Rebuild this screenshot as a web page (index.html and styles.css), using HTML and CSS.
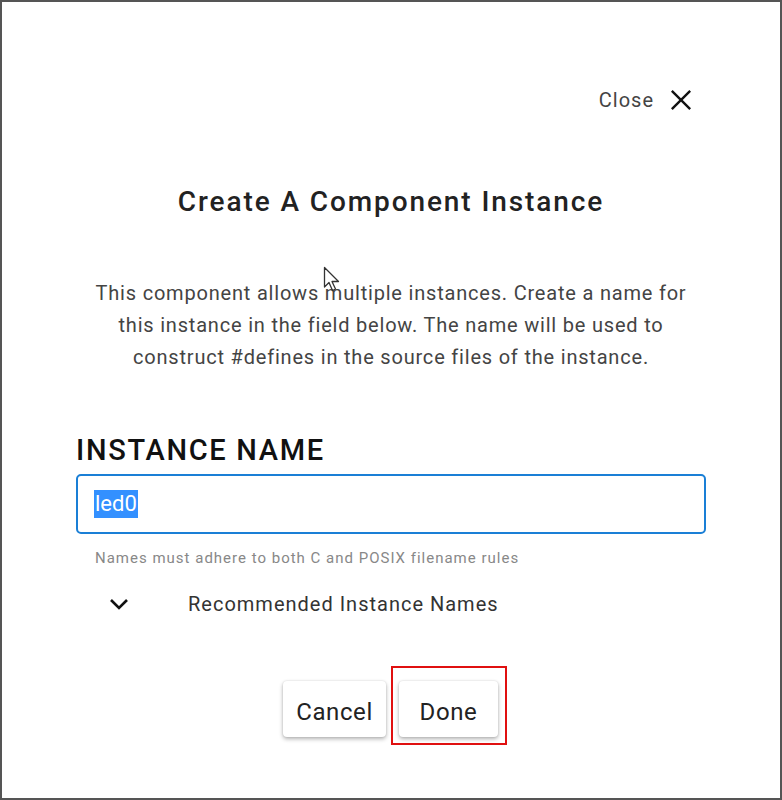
FILE: index.html
```html
<!DOCTYPE html>
<html lang="en">
<head>
  <meta charset="UTF-8">
  <title>Create A Component Instance</title>
  <link rel="stylesheet" href="styles.css">
</head>
<body>
  <div class="frame">
    <div class="dialog">
      <!-- Close -->
      <div class="close-row">
        <span class="close-text">Close</span>
        <svg class="close-icon" width="24" height="24" viewBox="0 0 24 24">
          <path d="M2 2 L22 22 M22 2 L2 22" stroke="#111" stroke-width="2.6" fill="none"/>
        </svg>
      </div>

      <div class="title">Create A Component Instance</div>

      <p class="desc">
        This component allows multiple instances. Create a name for<br>
        this instance in the field below. The name will be used to<br>
        construct #defines in the source files of the instance.
      </p>

      <div class="label">INSTANCE NAME</div>
      <div class="input-box">
        <span class="selected">led0</span>
      </div>
      <div class="helper">Names must adhere to both C and POSIX filename rules</div>

      <div class="recommended">
        <svg class="chevron" width="20" height="20" viewBox="0 0 20 20">
          <path d="M2 6 L10 14 L18 6" stroke="#111" stroke-width="2.6" fill="none"/>
        </svg>
        <span>Recommended Instance Names</span>
      </div>

      <div class="actions">
        <button class="btn btn-cancel">Cancel</button>
        <div class="highlight">
          <button class="btn btn-done">Done</button>
        </div>
      </div>
    </div>

    <!-- mouse pointer -->
    <svg class="pointer" width="24" height="30" viewBox="0 0 24 30">
      <path d="M1.5 1.5 L1.5 21 L6 16.5 L9.5 24.5 L12.5 23 L9 15.5 L15.5 15.5 Z" fill="#fff" stroke="#333" stroke-width="1.3" stroke-linejoin="round"/>
    </svg>
  </div>
</body>
</html>
```

FILE: styles.css
```css
* {
  box-sizing: border-box;
}

html, body {
  margin: 0;
  padding: 0;
  background: #fff;
  font-family: Roboto, "Liberation Sans", sans-serif;
}

.frame {
  width: 782px;
  height: 800px;
  border: 2px solid #555;
  position: relative;
  background: #fff;
}

.dialog {
  padding: 0 74px;
  display: flex;
  flex-direction: column;
}

.close-row {
  display: flex;
  justify-content: flex-end;
  align-items: center;
  gap: 16px;
  margin-top: 86px;
  margin-right: 14px;
  height: 24px;
}

.close-text {
  font-size: 20px;
  letter-spacing: 1px;
  color: #444;
}

.close-icon {
  width: 22px;
  height: 22px;
}

.title {
  margin-top: 72px;
  text-align: center;
  font-size: 28px;
  font-weight: 500;
  letter-spacing: 1.9px;
  color: #222;
  line-height: 36px;
}

.desc {
  margin: 57px 0 0;
  text-align: center;
  font-size: 20px;
  line-height: 32px;
  letter-spacing: 0.8px;
  color: #444;
}

.label {
  margin-top: 59px;
  font-size: 29px;
  font-weight: 500;
  letter-spacing: 1.7px;
  color: #111;
  line-height: 36px;
}

.input-box {
  margin-top: 6px;
  height: 60px;
  border: 2px solid #1a7fd6;
  border-radius: 5px;
  display: flex;
  align-items: center;
  padding-left: 16px;
}

.selected {
  background: #3390ff;
  color: #fff;
  font-size: 22px;
  line-height: 28px;
  padding: 0 1px;
}

.helper {
  margin-top: 14px;
  padding-left: 19px;
  font-size: 15px;
  letter-spacing: 1px;
  color: #888;
  line-height: 20px;
}

.recommended {
  margin-top: 23px;
  display: flex;
  align-items: center;
  padding-left: 33px;
  font-size: 20px;
  letter-spacing: 1px;
  color: #333;
  line-height: 26px;
}

.chevron {
  width: 20px;
  height: 20px;
  margin-right: 59px;
}

.actions {
  margin-top: 49px;
  display: flex;
  justify-content: center;
  align-items: flex-start;
  gap: 5px;
  padding-left: 8px;
}

.btn {
  font-family: Roboto, "Liberation Sans", sans-serif;
  font-size: 24px;
  letter-spacing: 0.6px;
  color: #222;
  background: #fff;
  border: none;
  border-radius: 4px;
  height: 56px;
  padding: 6px 0 0;
  box-shadow: 0 2px 4px rgba(0, 0, 0, 0.3), 0 0 2px rgba(0, 0, 0, 0.12);
}

.btn-cancel {
  width: 103px;
  margin-top: 15px;
}

.btn-done {
  width: 99px;
}

.highlight {
  border: 2px solid #e01010;
  padding: 13px 7px 6px 6px;
}

.pointer {
  position: absolute;
  left: 321px;
  top: 264px;
}
```
